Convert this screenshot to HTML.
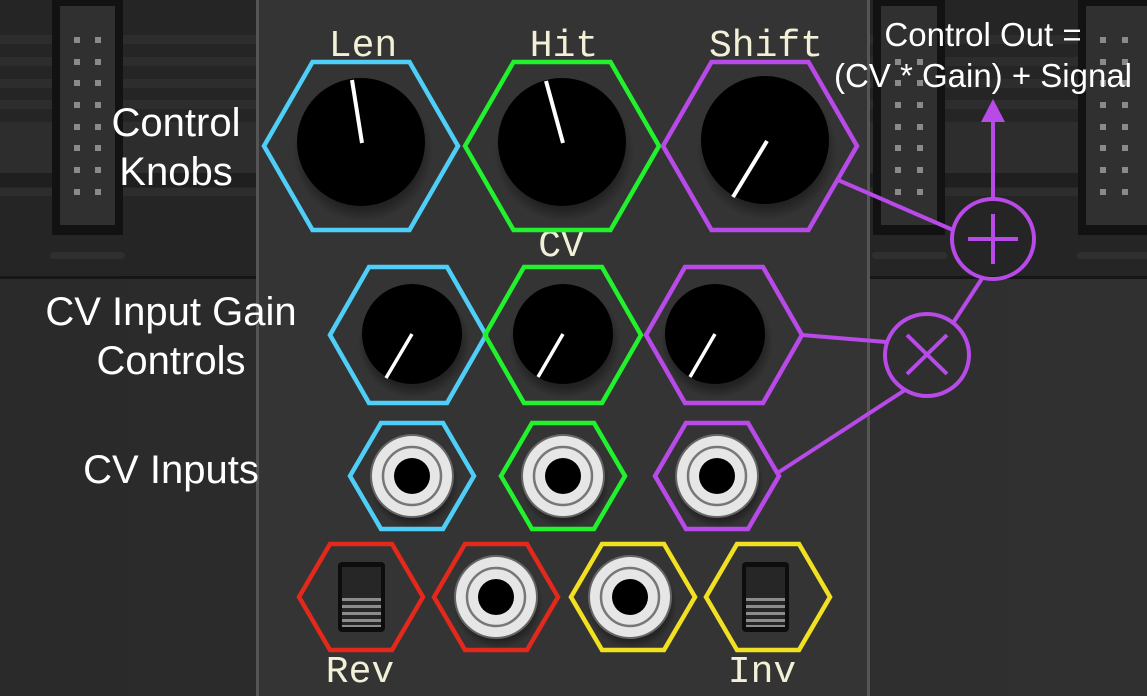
<!DOCTYPE html>
<html><head><meta charset="utf-8"><style>
html,body{margin:0;padding:0;background:#2a2a2a;}
svg{display:block}
</style></head><body>
<svg width="1147" height="696" viewBox="0 0 1147 696" xmlns="http://www.w3.org/2000/svg">
<defs>
<radialGradient id="sh" cx="0.5" cy="0.5" r="0.5"><stop offset="0.8" stop-color="#000" stop-opacity="0.35"/><stop offset="1" stop-color="#000" stop-opacity="0"/></radialGradient>
<linearGradient id="bgl" x1="0" y1="0" x2="1" y2="0"><stop offset="0" stop-color="#2a2a2a"/><stop offset="1" stop-color="#303030"/></linearGradient>
</defs>
<rect x="0" y="0" width="1147" height="696" fill="url(#bgl)"/>
<rect x="0" y="0" width="1147" height="278" fill="#252525"/>
<g fill="#2d2d2d">
<rect x="0" y="35" width="1147" height="9"/><rect x="0" y="57" width="1147" height="9"/><rect x="0" y="79" width="1147" height="9"/><rect x="0" y="100" width="1147" height="9"/><rect x="0" y="122" width="1147" height="60"/><rect x="0" y="188" width="1147" height="8"/>
</g>
<rect x="0" y="173" width="1147" height="14" fill="#1f1f1f"/>
<rect x="0" y="276" width="1147" height="3" fill="#161616"/>
<rect x="52" y="0" width="71" height="235" fill="#121212"/>
<rect x="60" y="6" width="55" height="219" fill="#303030"/>
<g fill="#8a8a8a">
<rect x="74" y="37" width="6" height="6"/><rect x="95" y="37" width="6" height="6"/>
<rect x="74" y="59" width="6" height="6"/><rect x="95" y="59" width="6" height="6"/>
<rect x="74" y="80" width="6" height="6"/><rect x="95" y="80" width="6" height="6"/>
<rect x="74" y="102" width="6" height="6"/><rect x="95" y="102" width="6" height="6"/>
<rect x="74" y="124" width="6" height="6"/><rect x="95" y="124" width="6" height="6"/>
<rect x="74" y="145" width="6" height="6"/><rect x="95" y="145" width="6" height="6"/>
<rect x="74" y="167" width="6" height="6"/><rect x="95" y="167" width="6" height="6"/>
<rect x="74" y="189" width="6" height="6"/><rect x="95" y="189" width="6" height="6"/>
</g>
<rect x="50" y="252" width="75" height="7" rx="3.5" fill="#2f2f2f"/>
<rect x="873" y="0" width="72" height="235" fill="#121212"/>
<rect x="881" y="6" width="56" height="219" fill="#303030"/>
<rect x="1078" y="0" width="69" height="235" fill="#121212"/>
<rect x="1086" y="6" width="61" height="219" fill="#303030"/>
<g fill="#8a8a8a">
<rect x="895" y="59" width="6" height="6"/><rect x="917" y="59" width="6" height="6"/>
<rect x="895" y="80" width="6" height="6"/><rect x="917" y="80" width="6" height="6"/>
<rect x="895" y="102" width="6" height="6"/><rect x="917" y="102" width="6" height="6"/>
<rect x="895" y="124" width="6" height="6"/><rect x="917" y="124" width="6" height="6"/>
<rect x="895" y="145" width="6" height="6"/><rect x="917" y="145" width="6" height="6"/>
<rect x="895" y="167" width="6" height="6"/><rect x="917" y="167" width="6" height="6"/>
<rect x="895" y="189" width="6" height="6"/><rect x="917" y="189" width="6" height="6"/>
<rect x="1100" y="37" width="6" height="6"/><rect x="1122" y="37" width="6" height="6"/>
<rect x="1100" y="59" width="6" height="6"/><rect x="1122" y="59" width="6" height="6"/>
<rect x="1100" y="80" width="6" height="6"/><rect x="1122" y="80" width="6" height="6"/>
<rect x="1100" y="102" width="6" height="6"/><rect x="1122" y="102" width="6" height="6"/>
<rect x="1100" y="124" width="6" height="6"/><rect x="1122" y="124" width="6" height="6"/>
<rect x="1100" y="145" width="6" height="6"/><rect x="1122" y="145" width="6" height="6"/>
<rect x="1100" y="167" width="6" height="6"/><rect x="1122" y="167" width="6" height="6"/>
<rect x="1100" y="189" width="6" height="6"/><rect x="1122" y="189" width="6" height="6"/>
</g>
<rect x="872" y="252" width="75" height="7" rx="3.5" fill="#2f2f2f"/>
<rect x="1077" y="252" width="75" height="7" rx="3.5" fill="#2f2f2f"/>
<rect x="256" y="0" width="614" height="696" fill="#343434"/>
<rect x="256" y="0" width="3" height="696" fill="#555"/>
<rect x="867" y="0" width="3" height="696" fill="#555"/>

<g font-family="'Liberation Mono',monospace" font-size="38" fill="#f3f0d8" text-anchor="middle">
<text x="363" y="56">Len</text><text x="564" y="56">Hit</text><text x="766" y="56">Shift</text>
<text x="561" y="256">CV</text>
<text x="360" y="682">Rev</text><text x="762" y="682">Inv</text>
</g>

<g fill="none" stroke-width="4.5" stroke-linejoin="miter">
<polygon points="264,146 312.5,62 409.5,62 458,146 409.5,230 312.5,230" stroke="#4fcff7"/>
<polygon points="465,146 513.5,62 610.5,62 659,146 610.5,230 513.5,230" stroke="#22f12d"/>
<polygon points="663,146 711.5,62 808.5,62 857,146 808.5,230 711.5,230" stroke="#b84ae8"/>
</g>
<g>
<circle cx="363" cy="152" r="70" fill="url(#sh)"/><circle cx="361" cy="142" r="64" fill="#000"/>
<circle cx="564" cy="152" r="70" fill="url(#sh)"/><circle cx="562" cy="142" r="64" fill="#000"/>
<circle cx="767" cy="150" r="70" fill="url(#sh)"/><circle cx="765" cy="140" r="64" fill="#000"/>
</g>
<g stroke="#fff" stroke-width="4">
<line x1="362" y1="143" x2="352" y2="80"/>
<line x1="563" y1="143" x2="546" y2="81"/>
<line x1="733" y1="197" x2="767" y2="141"/>
</g>

<g fill="none" stroke-width="4.5">
<polygon points="330,335 369,267 447,267 486,335 447,403 369,403" stroke="#4fcff7"/>
<polygon points="485,335 524,267 602,267 641,335 602,403 524,403" stroke="#22f12d"/>
<polygon points="646,335 685,267 763,267 802,335 763,403 685,403" stroke="#b84ae8"/>
</g>
<g>
<circle cx="414" cy="342" r="56" fill="url(#sh)"/><circle cx="412" cy="334" r="50" fill="#000"/>
<circle cx="565" cy="342" r="56" fill="url(#sh)"/><circle cx="563" cy="334" r="50" fill="#000"/>
<circle cx="717" cy="342" r="56" fill="url(#sh)"/><circle cx="715" cy="334" r="50" fill="#000"/>
</g>
<g stroke="#fff" stroke-width="3.5">
<line x1="412" y1="334" x2="386" y2="378"/>
<line x1="563" y1="334" x2="538" y2="377"/>
<line x1="715" y1="334" x2="690" y2="377"/>
</g>

<g fill="none" stroke-width="4.5">
<polygon points="350,476 381,423 443,423 474,476 443,529 381,529" stroke="#4fcff7"/>
<polygon points="501,476 532,423 594,423 625,476 594,529 532,529" stroke="#22f12d"/>
<polygon points="655,476 686,423 748,423 779,476 748,529 686,529" stroke="#b84ae8"/>
<polygon points="299,597 330,544 392,544 423,597 392,650 330,650" stroke="#e2291b"/>
<polygon points="434,597 465,544 527,544 558,597 527,650 465,650" stroke="#e2291b"/>
<polygon points="571,597 602,544 664,544 695,597 664,650 602,650" stroke="#f2e122"/>
<polygon points="706,597 737,544 799,544 830,597 799,650 737,650" stroke="#f2e122"/>
</g>
<g>
<g transform="translate(412,476)"><circle cx="2" cy="7" r="45" fill="url(#sh)"/><circle r="41" fill="#e6e6e6" stroke="#666" stroke-width="2"/><circle r="29" fill="none" stroke="#777" stroke-width="2.5"/><circle r="18" fill="#000"/></g>
<g transform="translate(563,476)"><circle cx="2" cy="7" r="45" fill="url(#sh)"/><circle r="41" fill="#e6e6e6" stroke="#666" stroke-width="2"/><circle r="29" fill="none" stroke="#777" stroke-width="2.5"/><circle r="18" fill="#000"/></g>
<g transform="translate(717,476)"><circle cx="2" cy="7" r="45" fill="url(#sh)"/><circle r="41" fill="#e6e6e6" stroke="#666" stroke-width="2"/><circle r="29" fill="none" stroke="#777" stroke-width="2.5"/><circle r="18" fill="#000"/></g>
<g transform="translate(496,597)"><circle cx="2" cy="7" r="45" fill="url(#sh)"/><circle r="41" fill="#e6e6e6" stroke="#666" stroke-width="2"/><circle r="29" fill="none" stroke="#777" stroke-width="2.5"/><circle r="18" fill="#000"/></g>
<g transform="translate(630,597)"><circle cx="2" cy="7" r="45" fill="url(#sh)"/><circle r="41" fill="#e6e6e6" stroke="#666" stroke-width="2"/><circle r="29" fill="none" stroke="#777" stroke-width="2.5"/><circle r="18" fill="#000"/></g>
</g>
<g>
<rect x="338" y="562" width="47" height="70" rx="4" fill="#0d0d0d"/>
<rect x="342" y="567" width="39" height="60" fill="#262626"/>
<g fill="#8c8c8c"><rect x="342" y="598" width="39" height="3"/><rect x="342" y="605" width="39" height="3"/><rect x="342" y="612" width="39" height="3"/><rect x="342" y="619" width="39" height="3"/><rect x="342" y="625" width="39" height="2"/></g>
<rect x="742" y="562" width="47" height="70" rx="4" fill="#0d0d0d"/>
<rect x="746" y="567" width="39" height="60" fill="#262626"/>
<g fill="#8c8c8c"><rect x="746" y="598" width="39" height="3"/><rect x="746" y="605" width="39" height="3"/><rect x="746" y="612" width="39" height="3"/><rect x="746" y="619" width="39" height="3"/><rect x="746" y="625" width="39" height="2"/></g>
</g>

<g stroke="#b84ae8" stroke-width="4" fill="none">
<line x1="838" y1="180" x2="953" y2="230"/>
<line x1="802" y1="335" x2="886" y2="342"/>
<line x1="779" y1="472" x2="905" y2="390"/>
<line x1="953" y1="323" x2="983" y2="277"/>
<line x1="993" y1="200" x2="993" y2="118"/>
<ellipse cx="993" cy="239" rx="41" ry="40"/>
<line x1="968" y1="239" x2="1018" y2="239"/><line x1="993" y1="214" x2="993" y2="264"/>
<ellipse cx="927" cy="355" rx="42" ry="41"/>
<line x1="907" y1="335" x2="947" y2="374"/><line x1="947" y1="335" x2="907" y2="374"/>
</g>
<polygon points="993,99 981,122 1005,122" fill="#b84ae8"/>

<g font-family="'Liberation Sans',sans-serif" fill="#fff" text-anchor="middle">
<g font-size="40">
<text x="176" y="136">Control</text><text x="176" y="185">Knobs</text>
<text x="171" y="325">CV Input Gain</text><text x="171" y="374">Controls</text>
<text x="171" y="483">CV Inputs</text>
</g>
<g font-size="33">
<text x="983" y="46">Control Out =</text>
<text x="983" y="87">(CV * Gain) + Signal</text>
</g>
</g>
</svg>
</body></html>
